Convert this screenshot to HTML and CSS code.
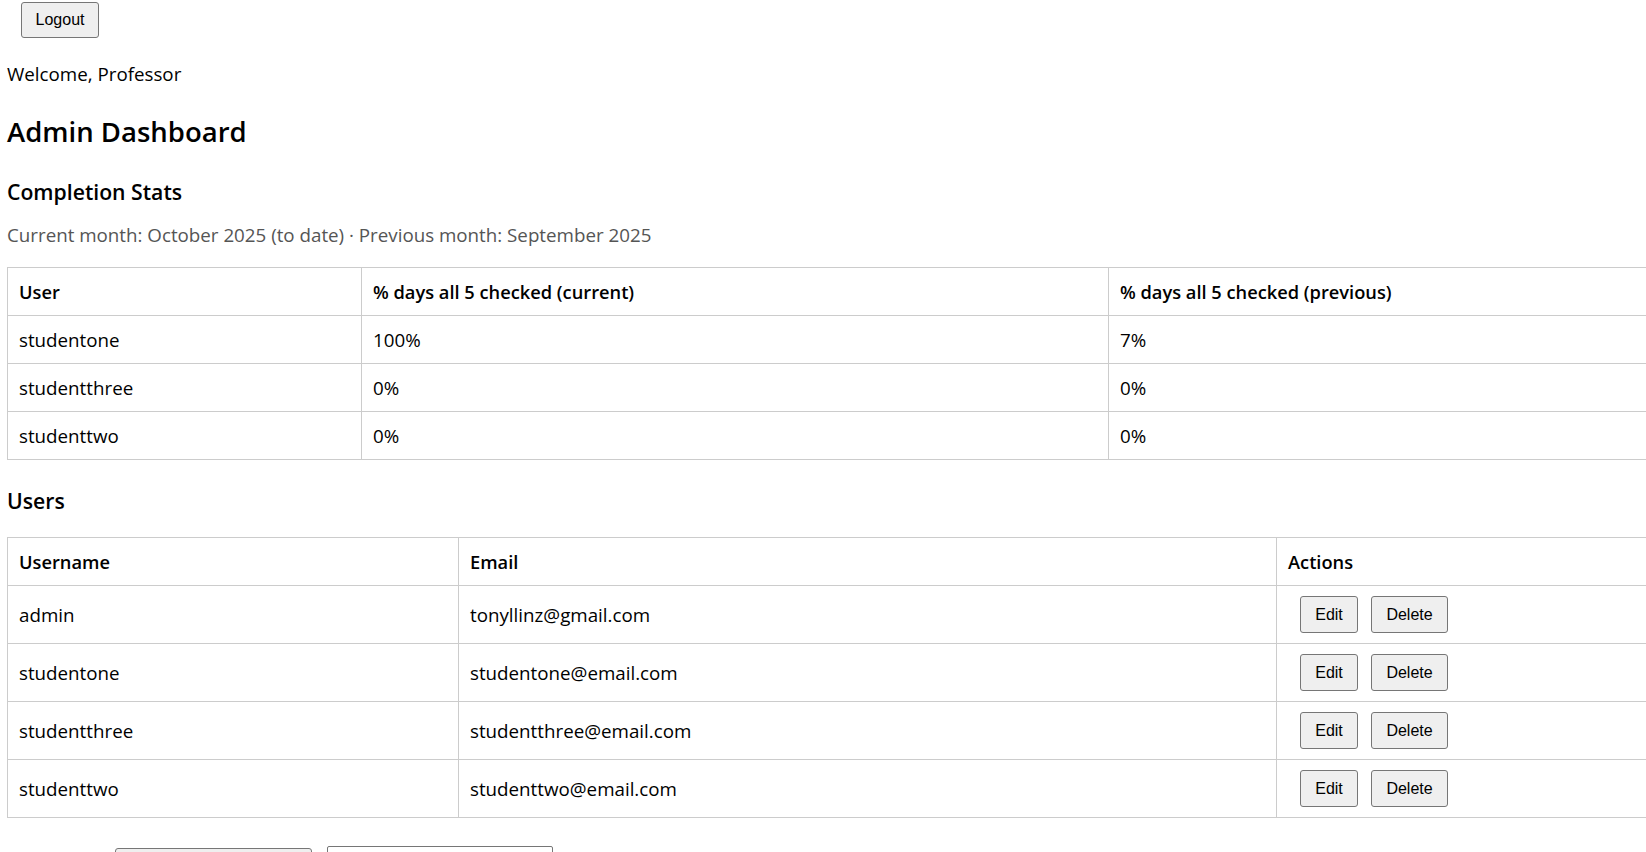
FILE: index.html
```html
<!DOCTYPE html>
<html lang="en">
<head>
<meta charset="utf-8">
<title>Admin Dashboard</title>
<link rel="stylesheet" href="styles.css">
</head>
<body>
<div class="topbar"><button class="btn logout">Logout</button></div>
<p class="welcome">Welcome, Professor</p>
<h1 class="title">Admin Dashboard</h1>
<h2 class="section">Completion Stats</h2>
<p class="subtitle">Current month: October 2025 (to date) · Previous month: September 2025</p>
<table class="grid stats">
  <colgroup><col class="c1"><col class="c2"><col class="c3"></colgroup>
  <thead>
    <tr><th>User</th><th>% days all 5 checked (current)</th><th>% days all 5 checked (previous)</th></tr>
  </thead>
  <tbody>
    <tr><td>studentone</td><td>100%</td><td>7%</td></tr>
    <tr><td>studentthree</td><td>0%</td><td>0%</td></tr>
    <tr><td>studenttwo</td><td>0%</td><td>0%</td></tr>
  </tbody>
</table>
<h2 class="section users-title">Users</h2>
<table class="grid users">
  <colgroup><col class="u1"><col class="u2"><col class="u3"></colgroup>
  <thead>
    <tr><th>Username</th><th>Email</th><th>Actions</th></tr>
  </thead>
  <tbody>
    <tr><td>admin</td><td>tonyllinz@gmail.com</td><td><div class="actions"><button class="btn small">Edit</button><button class="btn small">Delete</button></div></td></tr>
    <tr><td>studentone</td><td>studentone@email.com</td><td><div class="actions"><button class="btn small">Edit</button><button class="btn small">Delete</button></div></td></tr>
    <tr><td>studentthree</td><td>studentthree@email.com</td><td><div class="actions"><button class="btn small">Edit</button><button class="btn small">Delete</button></div></td></tr>
    <tr><td>studenttwo</td><td>studenttwo@email.com</td><td><div class="actions"><button class="btn small">Edit</button><button class="btn small">Delete</button></div></td></tr>
  </tbody>
</table>
<div class="bottom-row">
  <button class="btn wide" aria-label="Add user"></button>
  <input class="field" type="text" aria-label="New user">
</div>
</body>
</html>
```
FILE: styles.css
```css
html {
  overflow: hidden;
}
body {
  margin: 0;
  padding: 0 0 0 7px;
  font-family: "Open Sans", "Noto Sans", sans-serif;
  font-size: 18.75px;
  line-height: 24px;
  color: #000;
  background: #fff;
}
.btn {
  font-family: "Liberation Sans", Arial, sans-serif;
  font-size: 16px;
  color: #000;
  background: #efefef;
  border: 1px solid #767676;
  border-radius: 3px;
  box-sizing: border-box;
  margin: 0;
  padding: 0;
}
.topbar {
  padding: 2px 0 0 14px;
  height: 36px;
}
.logout {
  width: 78px;
  height: 36px;
}
.welcome {
  margin: 24px 0 0;
}
.title {
  margin: 28px 0 0;
  font-size: 27.5px;
  line-height: 36px;
  font-weight: 600;
}
.section {
  margin: 28px 0 0;
  font-size: 21.2px;
  line-height: 28px;
  font-weight: 600;
}
.subtitle {
  margin: 17px 0 0;
  color: #555;
}
.grid {
  border-collapse: collapse;
  table-layout: fixed;
  width: 1700px;
  margin-top: 20px;
}
.grid th,
.grid td {
  border: 1px solid #ccc;
  text-align: left;
  padding: 12px 11px 11px;
  vertical-align: middle;
}
.grid th {
  font-weight: 600;
  font-size: 18.25px;
}
.c1 { width: 354px; }
.c2 { width: 747px; }
.c3 { width: 599px; }
.users-title {
  margin-top: 27px;
}
.users {
  margin-top: 22px;
}
.u1 { width: 451px; }
.u2 { width: 818px; }
.u3 { width: 431px; }
.users td {
  padding: 10px 11px;
  height: 37px;
}
.actions {
  display: flex;
  gap: 13px;
  padding-left: 12px;
}
.small {
  height: 37px;
}
.small:first-child {
  width: 58px;
}
.small:last-child {
  width: 77px;
}
.bottom-row {
  display: flex;
  align-items: flex-start;
  margin-top: 28px;
  padding-left: 108px;
  gap: 15px;
}
.wide {
  width: 197px;
  height: 37px;
  margin-top: 2px;
}
.field {
  width: 226px;
  height: 40px;
  box-sizing: border-box;
  border: 1px solid #767676;
  border-radius: 2px;
  margin: 0;
  background: #fff;
}
```
